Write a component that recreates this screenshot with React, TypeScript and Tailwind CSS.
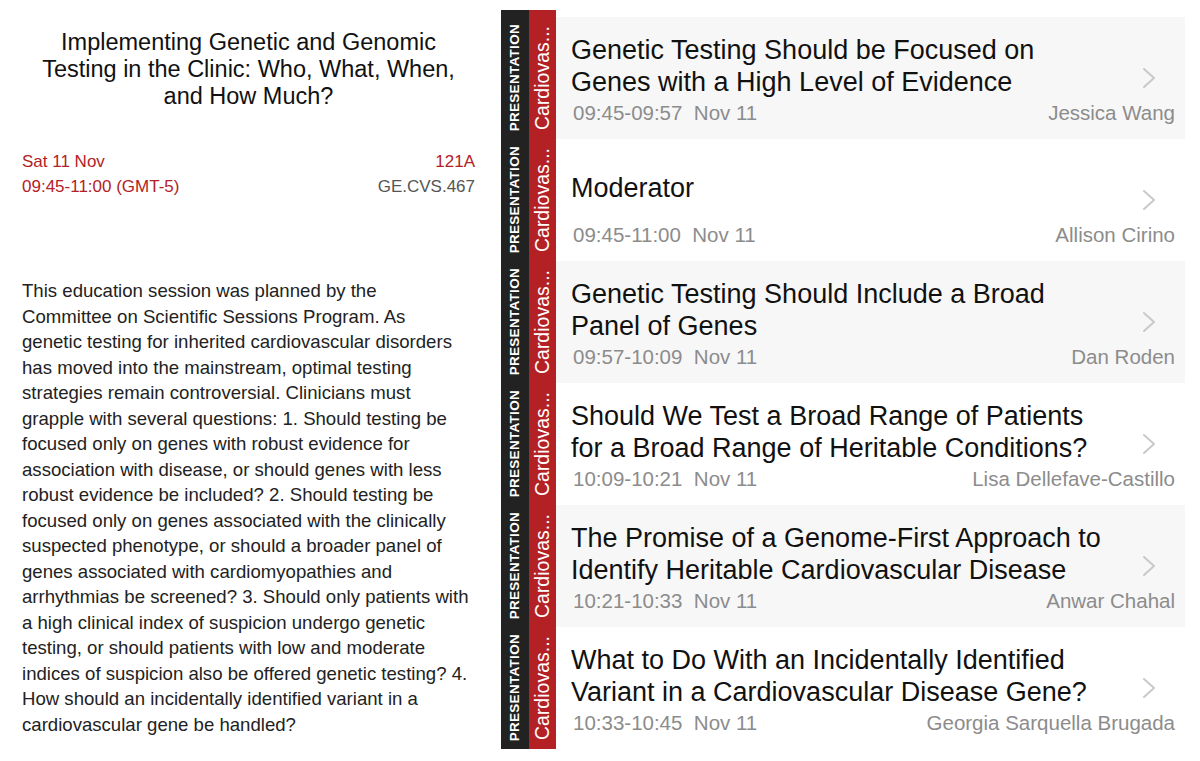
const talks = [
  {
    title: ["Genetic Testing Should be Focused on", "Genes with a High Level of Evidence"],
    time: "09:45-09:57",
    speaker: "Jessica Wang",
  },
  { title: ["Moderator"], time: "09:45-11:00", speaker: "Allison Cirino" },
  {
    title: ["Genetic Testing Should Include a Broad", "Panel of Genes"],
    time: "09:57-10:09",
    speaker: "Dan Roden",
  },
  {
    title: ["Should We Test a Broad Range of Patients", "for a Broad Range of Heritable Conditions?"],
    time: "10:09-10:21",
    speaker: "Lisa Dellefave-Castillo",
  },
  {
    title: ["The Promise of a Genome-First Approach to", "Identify Heritable Cardiovascular Disease"],
    time: "10:21-10:33",
    speaker: "Anwar Chahal",
  },
  {
    title: ["What to Do With an Incidentally Identified", "Variant in a Cardiovascular Disease Gene?"],
    time: "10:33-10:45",
    speaker: "Georgia Sarquella Brugada",
  },
];

const description = [
  "This education session was planned by the",
  "Committee on Scientific Sessions Program. As",
  "genetic testing for inherited cardiovascular disorders",
  "has moved into the mainstream, optimal testing",
  "strategies remain controversial. Clinicians must",
  "grapple with several questions: 1. Should testing be",
  "focused only on genes with robust evidence for",
  "association with disease, or should genes with less",
  "robust evidence be included? 2. Should testing be",
  "focused only on genes associated with the clinically",
  "suspected phenotype, or should a broader panel of",
  "genes associated with cardiomyopathies and",
  "arrhythmias be screened? 3. Should only patients with",
  "a high clinical index of suspicion undergo genetic",
  "testing, or should patients with low and moderate",
  "indices of suspicion also be offered genetic testing? 4.",
  "How should an incidentally identified variant in a",
  "cardiovascular gene be handled?",
];

const Chevron = () => (
  <svg width="16" height="22" viewBox="0 0 16 22" fill="none">
    <polyline points="3,2 13,11 3,20" stroke="#c9c9c9" strokeWidth="2" strokeLinecap="round" strokeLinejoin="round" />
  </svg>
);

const TalkRow = ({ talk, shaded }: { talk: (typeof talks)[number]; shaded: boolean }) => (
  <div className="flex h-[122px]">
    <div className="w-[28px] bg-[#222222] flex items-center justify-center">
      <span className="[writing-mode:vertical-rl] rotate-180 text-white text-[13.5px] font-bold tracking-[0.3px] leading-none">
        PRESENTATION
      </span>
    </div>
    <div className="w-[27px] bg-[#b42125] flex items-center justify-center">
      <span className="[writing-mode:vertical-rl] rotate-180 text-white text-[19.5px] leading-none">
        Cardiovas...
      </span>
    </div>
    <div className={`w-[629px] flex pl-[15px] pr-[10px] ${shaded ? "bg-[#f7f7f7]" : "bg-white"}`}>
      <div className="flex-1 flex flex-col pt-[17px]">
        <div className="h-[64px] flex flex-col justify-center text-[27px] leading-[32px] text-[#111]">
          {talk.title.map((line) => (
            <div key={line} className="whitespace-nowrap">{line}</div>
          ))}
        </div>
        <div className="mt-[3px] flex justify-between items-center h-[24px] text-[20.5px] text-[#8c8c8c] pl-[2px]">
          <span className="whitespace-nowrap">
            {talk.time}&nbsp;&nbsp;Nov 11
          </span>
          <span className="whitespace-nowrap">{talk.speaker}</span>
        </div>
      </div>
      <div className="w-0 relative">
        <div className="absolute right-[18px] top-[50px]">
          <Chevron />
        </div>
      </div>
    </div>
  </div>
);

export default function App() {
  return (
    <div className="w-[1200px] h-[761px] bg-white flex font-['Liberation_Sans',Arial,sans-serif] overflow-hidden">
      <div className="w-[501px] pl-[22px] pr-[26px] flex flex-col">
        <div className="pt-[29px] text-center text-[23.5px] leading-[27px] text-[#111]">
          <div>Implementing Genetic and Genomic</div>
          <div>Testing in the Clinic: Who, What, When,</div>
          <div>and How Much?</div>
        </div>
        <div className="mt-[39px] flex justify-between text-[17px] leading-[25px]">
          <div className="text-[#b42125]">
            <div>Sat 11 Nov</div>
            <div>09:45-11:00 (GMT-5)</div>
          </div>
          <div className="text-right">
            <div className="text-[#b42125]">121A</div>
            <div className="text-[#555]">GE.CVS.467</div>
          </div>
        </div>
        <div className="mt-[79px] text-[18.6px] leading-[25.5px] text-[#222]">
          {description.map((line) => (
            <div key={line} className="whitespace-nowrap">{line}</div>
          ))}
        </div>
      </div>
      <div className="pt-[10px] flex flex-col">
        <div className="flex h-[7px]">
          <div className="w-[28px] bg-[#222222]" />
          <div className="w-[27px] bg-[#b42125]" />
        </div>
        {talks.map((talk, i) => (
          <TalkRow key={talk.time + i} talk={talk} shaded={i % 2 === 0} />
        ))}
      </div>
    </div>
  );
}
